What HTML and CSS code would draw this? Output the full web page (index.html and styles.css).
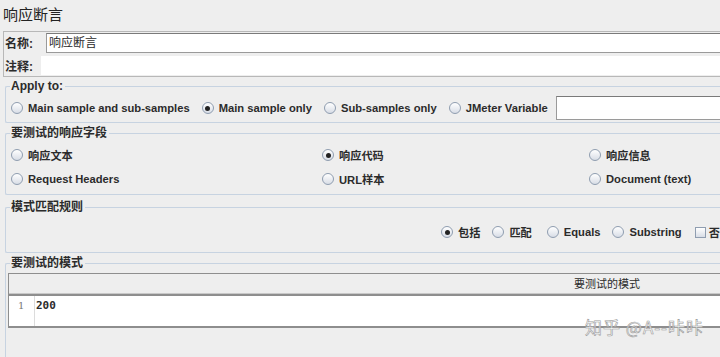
FILE: index.html
```html
<!DOCTYPE html>
<html lang="zh-CN">

<head>
    <meta charset="UTF-8">
    <title>响应断言</title>
    <link rel="stylesheet" href="styles.css">
</head>

<body>
    <div class="page">
        <h1 class="title">响应断言</h1>

        <!-- 名称 / 注释 -->
        <div class="name-panel">
            <div class="name-row">
                <span class="label">名称:</span>
                <div class="name-input">响应断言</div>
            </div>
            <div class="comment-row">
                <span class="label">注释:</span>
                <div class="comment-input"></div>
            </div>
        </div>

        <fieldset class="group apply">
            <legend>Apply to:</legend>
            <div class="apply-row">
                <span class="radio"></span><span class="opt">Main sample and sub-samples</span>
                <span class="radio on"></span><span class="opt">Main sample only</span>
                <span class="radio"></span><span class="opt">Sub-samples only</span>
                <span class="radio"></span><span class="opt">JMeter Variable</span>
                <div class="var-input"></div>
            </div>
        </fieldset>

        <fieldset class="group fields">
            <legend>要测试的响应字段</legend>
            <div class="field-grid">
                <div class="item"><span class="radio"></span><span class="opt">响应文本</span></div>
                <div class="item"><span class="radio on"></span><span class="opt">响应代码</span></div>
                <div class="item"><span class="radio"></span><span class="opt">响应信息</span></div>
                <div class="item"><span class="radio"></span><span class="opt">Request Headers</span></div>
                <div class="item"><span class="radio"></span><span class="opt">URL样本</span></div>
                <div class="item"><span class="radio"></span><span class="opt">Document (text)</span></div>
            </div>
        </fieldset>

        <fieldset class="group rules">
            <legend>模式匹配规则</legend>
            <div class="rule-row">
                <span class="radio on"></span><span class="opt">包括</span>
                <span class="radio"></span><span class="opt wide">匹配</span>
                <span class="radio"></span><span class="opt">Equals</span>
                <span class="radio"></span><span class="opt">Substring</span>
                <span class="check"></span><span class="opt">否</span>
            </div>
        </fieldset>

        <fieldset class="group patterns">
            <legend>要测试的模式</legend>
            <div class="table">
                <div class="table-head">要测试的模式</div>
                <div class="table-body">
                    <div class="gutter">1</div>
                    <div class="code">200</div>
                </div>
            </div>
        </fieldset>
    </div>

    <!-- 水印 -->
    <div class="watermark">知乎 @A--咔咔</div>
</body>

</html>
```

FILE: styles.css
```css
body {
    margin: 0;
    background-color: #eeeeee;
    font-family: "Liberation Sans", "Noto Sans CJK SC", sans-serif;
    color: #2b2b2b;
    width: 720px;
    height: 357px;
    overflow: hidden;
    position: relative;
}

.page {
    width: 760px;
}

.title {
    margin: 0 0 6px 3px;
    padding-top: 5px;
    font-size: 15px;
    line-height: 20px;
    font-weight: normal;
    color: #222;
}

.name-panel {
    margin-left: 3px;
    border: 1px solid #b8b8b8;
    border-right: none;
    padding-bottom: 1px;
}

.label {
    font-size: 12px;
    font-weight: bold;
    padding-left: 1px;
}

.name-row {
    display: flex;
    align-items: center;
    height: 21px;
}

.name-row .label {
    width: 41px;
}

.name-input {
    flex: 1;
    box-sizing: border-box;
    height: 20px;
    background: white;
    border: 1px solid #9a9a9a;
    border-top-color: #7a7a7a;
    font-size: 12px;
    line-height: 18px;
    padding-left: 2px;
}

.comment-row {
    display: flex;
    align-items: center;
    height: 19px;
    margin-top: 3px;
}

.comment-row .label {
    width: 36px;
}

.comment-input {
    flex: 1;
    height: 19px;
    background: white;
}

/* 分组框 */
.group {
    margin: 3px 0 0 5px;
    border: 1px solid #c7d3e1;
    border-right: none;
    border-radius: 2px;
    padding: 0 0 0 5px;
    min-width: 0;
}

.group legend {
    font-size: 12px;
    line-height: 12px;
    font-weight: bold;
    padding: 0 2px 0 1px;
    margin-left: -1px;
}

.radio {
    display: inline-block;
    box-sizing: border-box;
    width: 12px;
    height: 12px;
    border: 1px solid #8f9db0;
    border-radius: 50%;
    background: linear-gradient(#ffffff, #d8dde6);
    position: relative;
    flex-shrink: 0;
}

.radio.on::after {
    content: "";
    position: absolute;
    left: 2.5px;
    top: 2.5px;
    width: 5px;
    height: 5px;
    border-radius: 50%;
    background: #222;
}

.check {
    display: inline-block;
    box-sizing: border-box;
    width: 11px;
    height: 11px;
    border: 1px solid #8f9db0;
    background: linear-gradient(#ffffff, #d8dde6);
}

.opt {
    font-size: 11.2px;
    font-weight: bold;
    margin-left: 5px;
    white-space: nowrap;
}

.apply {
    padding: 4px 0 2px 5px;
}

.apply-row {
    display: flex;
    align-items: center;
    height: 24px;
}

.apply-row .opt {
    margin-right: 12px;
}

.var-input {
    width: 300px;
    height: 24px;
    box-sizing: border-box;
    background: white;
    border: 1px solid #9a9a9a;
    border-top-color: #7a7a7a;
    margin-left: -4px;
}

.fields {
    margin-top: 4px;
    padding: 4px 0 3px 5px;
}

.field-grid {
    display: grid;
    grid-template-columns: 311px 267px 1fr;
    grid-auto-rows: 24px;
}

.item {
    display: flex;
    align-items: center;
}

.rules {
    margin-top: 6px;
    padding: 7px 0 8px 5px;
}

.rule-row {
    display: flex;
    align-items: center;
    height: 24px;
    margin-left: 430px;
}

.rule-row .opt {
    margin-right: 12px;
}

.rule-row .opt.wide {
    margin-right: 15px;
}

.rule-row .check {
    margin-left: 1px;
}

.rule-row .opt:last-child {
    margin-left: 3px;
}

.patterns {
    margin-top: 4px;
    padding: 4px 0 40px 2px;
}

.patterns legend {
    margin-left: 2px;
}

.table {
    border-top: 1px solid #8e8e8e;
    border-left: 1px solid #8e8e8e;
}

.table-head {
    height: 20px;
    line-height: 20px;
    font-size: 11px;
    padding-left: 565px;
    border-bottom: 2px solid #8e8e8e;
    box-shadow: inset 0 -1px 0 #c8c8c8;
}

.table-body {
    display: flex;
    background: white;
    height: 30px;
    border-bottom: 2px solid #8e8e8e;
}

.gutter {
    width: 26px;
    border-right: 1px solid #dcdcdc;
    box-sizing: border-box;
    font-family: "DejaVu Serif", serif;
    font-size: 10px;
    color: #777;
    padding: 4px 0 0 9px;
}

.code {
    font-family: "DejaVu Sans Mono", monospace;
    font-size: 11px;
    font-weight: bold;
    padding-top: 3px;
    padding-left: 1px;
}

.watermark {
    position: absolute;
    left: 585px;
    top: 314px;
    font-family: "Noto Sans CJK SC", sans-serif;
    font-size: 17px;
    color: rgba(255, 255, 255, 0.85);
    -webkit-text-stroke: 0.6px #9a9a9a;
    letter-spacing: 1px;
}
```
